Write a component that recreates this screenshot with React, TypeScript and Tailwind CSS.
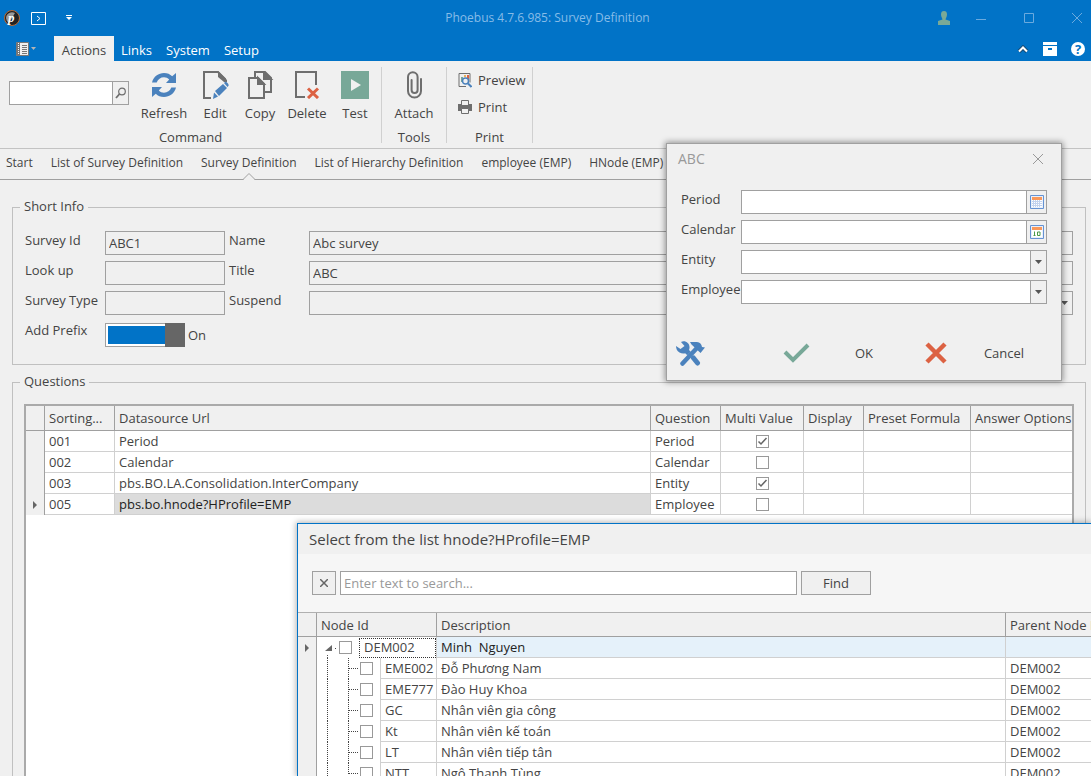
import React from "react";

const questions = [
  { sort: "001", url: "Period", question: "Period", multi: true },
  { sort: "002", url: "Calendar", question: "Calendar", multi: false },
  { sort: "003", url: "pbs.BO.LA.Consolidation.InterCompany", question: "Entity", multi: true },
  { sort: "005", url: "pbs.bo.hnode?HProfile=EMP", question: "Employee", multi: false },
];

const nodes = [
  { id: "EME002", name: "Đỗ Phương Nam" },
  { id: "EME777", name: "Đào Huy Khoa" },
  { id: "GC", name: "Nhân viên gia công" },
  { id: "Kt", name: "Nhân viên kế toán" },
  { id: "LT", name: "Nhân viên tiếp tân" },
  { id: "NTT", name: "Ngô Thanh Tùng" },
];

const documentTabs = [
  "Start",
  "List of Survey Definition",
  "Survey Definition",
  "List of Hierarchy Definition",
  "employee (EMP)",
  "HNode (EMP)",
];

/* ---------- Icons ---------- */

const RefreshIcon = () => (
  <svg width="28" height="28" viewBox="0 0 28 28" fill="#4b82bd">
    <path d="M2 11.500C3.500 5.500 8.500 2 14 2c3.500 0 6 1.200 8.200 3.300L26 2v10H16l3.200-3.500C17.700 7 16 6.300 14 6.300c-3.400 0-6 2-7.300 5.200z" />
    <path d="M26 16.500C24.500 22.500 19.500 26 14 26c-3.500 0-6-1.200-8.200-3.300L2 26V16h10l-3.200 3.500C10.300 21 12 21.700 14 21.700c3.400 0 6-2 7.300-5.200z" />
  </svg>
);

const EditIcon = () => (
  <svg width="28" height="28" viewBox="0 0 28 28">
    <path d="M10 27H3V1h14l7 7v3" fill="none" stroke="#6e6e6e" strokeWidth="2" />
    <path d="M17 0l9 9v2h-3l-6-5z" fill="#6e6e6e" />
    <path d="M14 20l8-7 4 4-8 8zM23 12l1-1c1-1 4.500 2.500 3.500 3.800L26.500 16zM13 21.500l4 4-5 2.500z" fill="#4b82bd" />
  </svg>
);

const CopyIcon = () => (
  <svg width="28" height="28" viewBox="0 0 28 28" fill="none" stroke="#6e6e6e" strokeWidth="2">
    <path d="M9 6V1h10l6 6v14h-6" />
    <path d="M18 1v7h7z" fill="#6e6e6e" />
    <path d="M3 7h9l6 6v14H3z" />
    <path d="M12 7v6h6z" fill="#6e6e6e" />
  </svg>
);

const DeleteIcon = () => (
  <svg width="28" height="28" viewBox="0 0 28 28" fill="none">
    <path d="M12 26H3V1h20v13" stroke="#6e6e6e" strokeWidth="2" />
    <path d="M15 17.500l10 9.500M25 17.500L15 27" stroke="#dc6243" strokeWidth="3" />
  </svg>
);

const TestIcon = () => (
  <svg width="28" height="28" viewBox="0 0 28 28">
    <path d="M0 0h28v28H0z" fill="#78a898" />
    <path d="M10 8l10 6-10 6z" fill="#f0f0f0" />
  </svg>
);

const AttachIcon = () => (
  <svg width="28" height="28" viewBox="0 0 28 28" fill="none" stroke="#6e6e6e" strokeWidth="2" strokeLinecap="round">
    <path d="M21 8v12a6.500 6.500 0 0 1-13 0V6a4.800 4.800 0 0 1 9.600 0v13a3 3 0 0 1-6 0V9" />
  </svg>
);

const PreviewIcon = () => (
  <svg width="14" height="16" viewBox="0 0 14 16" fill="none">
    <path d="M8 14.500H1V1.500h11v9" stroke="#6e6e6e" />
    <path d="M3 5h2v5H3z" fill="#78a898" />
    <path d="M6 3h2v2H6z" fill="#e8b25c" />
    <path d="M9 3h2v4H9z" fill="#dc6243" />
    <circle cx="7.500" cy="9" r="3" fill="#f0f0f0" stroke="#4b82bd" strokeWidth="1.500" />
    <path d="M10 11.500l3.500 3.500" stroke="#4b82bd" strokeWidth="2" />
  </svg>
);

const PrintIcon = () => (
  <svg width="14" height="14" viewBox="0 0 14 14">
    <path d="M0 4h14v7H0z" fill="#6e6e6e" />
    <path d="M3.500.500h7v5h-7zM3.500 8.500h7v5h-7z" fill="#f0f0f0" stroke="#6e6e6e" />
    <path d="M2 6h10" stroke="#6e6e6e" strokeWidth="2" />
  </svg>
);

const SearchIcon = () => (
  <svg width="12" height="12" viewBox="0 0 12 12" fill="none" stroke="#6e6e6e">
    <circle cx="7" cy="4.500" r="3.300" strokeWidth="1.200" />
    <path d="M4.500 7L1 11" strokeWidth="1.800" />
  </svg>
);

const ArrowDown = () => (
  <svg width="7" height="4" viewBox="0 0 7 4">
    <path d="M0 0h7L3.500 4z" fill="#555" />
  </svg>
);

const ArrowRight = () => (
  <svg className="mx-auto" width="4" height="8" viewBox="0 0 4 8">
    <path d="M0 0v8l4-4z" fill="#666" />
  </svg>
);

const CalendarIcon = ({ day }: { day?: boolean }) => (
  <svg width="14" height="14" viewBox="0 0 14 14">
    <path d="M.500.500h13v13H.500z" fill="#e8f0fb" stroke="#6693d3" />
    <path d="M2 2h10v3H2z" fill="#f9985a" />
    <path d="M2 5h10v7H2z" fill="#fff" />
    {day ? (
      <path d="M4.500 6.500v4M3.500 10.500h2M7.500 7h2.500v3.500H7.500z" fill="none" stroke="#4b9a48" />
    ) : (
      <path d="M2 6.500h10M2 8.500h10M2 10.500h10M3.500 5v7M5.500 5v7M7.500 5v7M9.500 5v7" stroke="#c3d3ee" strokeWidth="1" />
    )}
  </svg>
);

const ToolsIcon = () => (
  <svg width="29" height="25" viewBox="0 0 29 25" fill="none">
    <path d="M6.500 22.500L20 8" stroke="#4b82bd" strokeWidth="4.500" strokeLinecap="round" />
    <path d="M14 1h7c3 .3 4.500 2 5 5l3 .5-4.500 5.500-9-8.500z" fill="#4b82bd" />
    <path d="M17.500 17l4 5" stroke="#4b82bd" strokeWidth="5" strokeLinecap="round" />
    <path d="M9 8.500l4 4" stroke="#4b82bd" strokeWidth="5" />
    <path d="M5 1c4-2 9 1 8.500 6-.5 5-6 7-10 4.500C1 10 0 7.500 0 5l4.500 3 4-3z" fill="#4b82bd" />
  </svg>
);

const CloseIcon = () => (
  <svg width="10" height="10" viewBox="0 0 10 10" fill="none" stroke="currentColor">
    <path d="M0 0l10 10M10 0L0 10" />
  </svg>
);

/* ---------- Controls ---------- */

const CheckBox = ({ label, checked }: { label: string; checked?: boolean }) => (
  <span className="inline-grid h-[13px] w-[13px] shrink-0">
    <input
      type="checkbox"
      aria-label={label}
      defaultChecked={checked}
      className="peer col-start-1 row-start-1 h-[13px] w-[13px] appearance-none border border-[#999] bg-white"
    />
    <svg
      className="pointer-events-none col-start-1 row-start-1 hidden peer-checked:block"
      width="13"
      height="13"
      viewBox="0 0 13 13"
      fill="none"
    >
      <path d="M2.500 6.500L5 9l5.500-6" stroke="#666" strokeWidth="1.500" />
    </svg>
  </span>
);

const SelectBox = ({ id, className }: { id: string; className: string }) => (
  <span className={`grid h-6 flex-1 border border-[#a0a0a0] ${className}`}>
    <select id={id} className="col-start-1 row-start-1 w-full appearance-none px-1 outline-none">
      <option></option>
    </select>
    <span className="pointer-events-none col-start-1 row-start-1 flex w-4 items-center justify-center justify-self-end border-l border-[#a0a0a0] bg-[#f0f0f0]">
      <ArrowDown />
    </span>
  </span>
);

const DateBox = ({ id, day }: { id: string; day?: boolean }) => (
  <span className="flex h-6 flex-1 border border-[#a0a0a0] bg-white">
    <input id={id} className="min-w-0 flex-1 px-1 outline-none" />
    <button aria-label="Pick a date" className="flex w-5 items-center justify-center border-l border-[#a0a0a0] bg-[#f0f0f0]">
      <CalendarIcon day={day} />
    </button>
  </span>
);

const ReadBox = ({ id, value }: { id: string; value?: string }) => (
  <input id={id} defaultValue={value} className="h-6 w-full border border-[#a0a0a0] bg-[#f0f0f0] px-[3px] outline-none" />
);

const FieldLabel = ({ htmlFor, children }: { htmlFor: string; children: React.ReactNode }) => (
  <label htmlFor={htmlFor} className="leading-[18px]">
    {children}
  </label>
);

const RibbonButton = ({ label, width, children }: { label: string; width: string; children: React.ReactNode }) => (
  <button className={`flex flex-col items-center gap-1 ${width}`}>
    {children}
    {label}
  </button>
);

/* ---------- Window parts ---------- */

const TitleBar = () => (
  <header className="bg-[#0173c7] text-white">
    <div className="grid h-9 grid-cols-[1fr_auto_1fr] items-center pl-1">
      <div className="flex items-center">
        <svg width="16" height="16" viewBox="0 0 16 16">
          <circle cx="8" cy="8" r="7.500" fill="#222" stroke="#b86a35" />
          <path d="M2 8a6 6 0 0 1 9-5L5 13a6 6 0 0 1-3-5z" fill="#999" />
          <text x="4" y="12" fontSize="13" fontStyle="italic" fontWeight="bold" fontFamily="Liberation Serif, serif" fill="#fff">
            p
          </text>
        </svg>
        <button aria-label="Run command" className="ml-[11px]">
          <svg width="15" height="13" viewBox="0 0 15 13" fill="none" stroke="#fff">
            <path d="M.500.500h14v12H.500zM6 4l3 2.500L6 9" />
          </svg>
        </button>
        <button aria-label="Customize toolbar" className="ml-5">
          <svg width="6" height="6" viewBox="0 0 6 6" fill="#fff">
            <path d="M0 0h6v1H0zM0 2h6L3 5z" />
          </svg>
        </button>
      </div>
      <h1 className="text-xs text-[#86bce7]">Phoebus 4.7.6.985: Survey Definition</h1>
      <div className="flex items-center justify-end gap-[38px] pr-[9px] text-[#6baade]">
        <button aria-label="User" className="-mr-3">
          <svg width="12" height="14" viewBox="0 0 12 14" fill="#7aa996">
            <path d="M3 3.500C3 1 4 0 6 0s3 1 3 3.500S7.500 7.500 7.500 8.500L12 10v4H0v-4l4.500-1.500C4.500 7.500 3 6 3 3.500z" />
          </svg>
        </button>
        <button aria-label="Minimize">
          <svg width="10" height="10" viewBox="0 0 10 10" stroke="currentColor">
            <path d="M0 6.500h10" />
          </svg>
        </button>
        <button aria-label="Maximize">
          <svg width="10" height="10" viewBox="0 0 10 10" fill="none" stroke="currentColor">
            <path d="M.500.500h9v9h-9z" />
          </svg>
        </button>
        <button aria-label="Close">
          <CloseIcon />
        </button>
      </div>
    </div>

    <div className="flex h-[25px] items-stretch">
      <button aria-label="Application menu" className="flex w-[54px] items-center gap-0.5 pl-4">
        <svg width="13" height="14" viewBox="0 0 13 14">
          <path d="M.500.500h12v13H.500z" fill="#f0f0f0" stroke="#777" />
          <path d="M1 1h3v12H1z" fill="#777" />
          <path d="M6 3.500h5M6 5.500h5M6 7.500h5M6 9.500h5M6 11.500h5" stroke="#777" />
          <path d="M2.500 1v12" stroke="#fff" strokeDasharray="1 1" />
        </svg>
        <svg width="5" height="3" viewBox="0 0 5 3">
          <path d="M0 0h5L2.500 3z" fill="#b5b5b5" />
        </svg>
      </button>
      <button className="w-[60px] bg-[#f0f0f0] pt-0.5 text-[#444]">Actions</button>
      <button className="px-[7px] pt-0.5">Links</button>
      <button className="px-[7px] pt-0.5">System</button>
      <button className="px-[7px] pt-0.5">Setup</button>
      <div className="ml-auto flex items-center gap-3.5 pr-1.5">
        <button aria-label="Collapse ribbon">
          <svg width="12" height="8" viewBox="0 0 12 8" fill="none">
            <path d="M2 6.500l4-4 4 4" stroke="#174a73" strokeWidth="4" />
            <path d="M2 6.500l4-4 4 4" stroke="#fff" strokeWidth="2" />
          </svg>
        </button>
        <button aria-label="Archive">
          <svg width="14" height="14" viewBox="0 0 14 14">
            <path d="M0 0h14v3H0zM0 4h14v10H0z" fill="#fff" />
            <path d="M5 6h4v2H5z" fill="#0173c7" />
          </svg>
        </button>
        <button className="h-3.5 w-3.5 rounded-full bg-white text-center text-[13px] leading-[14px] font-bold text-[#0173c7]">
          ?
        </button>
      </div>
    </div>
  </header>
);

const Ribbon = () => (
  <div className="flex h-[88px] items-start border-b border-[#c3c3c3] pt-1.5">
    <section className="flex h-[76px] w-[382px] flex-col justify-between border-r border-[#d0d0d0] pt-1">
      <div className="flex items-start">
        <div className="mt-2.5 mr-[9px] ml-[9px] flex h-6 w-[120px] border border-[#a0a0a0] bg-white">
          <input aria-label="Search" className="min-w-0 flex-1 px-1 outline-none" />
          <button aria-label="Search" className="flex w-4 items-center justify-center border-l border-[#a0a0a0] bg-[#f0f0f0]">
            <SearchIcon />
          </button>
        </div>
        <RibbonButton label="Refresh" width="w-[52px]">
          <RefreshIcon />
        </RibbonButton>
        <RibbonButton label="Edit" width="w-[50px]">
          <EditIcon />
        </RibbonButton>
        <RibbonButton label="Copy" width="w-10">
          <CopyIcon />
        </RibbonButton>
        <RibbonButton label="Delete" width="w-[54px]">
          <DeleteIcon />
        </RibbonButton>
        <RibbonButton label="Test" width="w-[42px]">
          <TestIcon />
        </RibbonButton>
      </div>
      <p className="text-center leading-3">Command</p>
    </section>
    <section className="flex h-[76px] w-[65px] flex-col items-center justify-between border-r border-[#d0d0d0] pt-1">
      <RibbonButton label="Attach" width="w-full">
        <AttachIcon />
      </RibbonButton>
      <p className="leading-3">Tools</p>
    </section>
    <section className="flex h-[76px] w-[86px] flex-col justify-between border-r border-[#d0d0d0] pt-1">
      <div className="flex flex-col items-start gap-[9px] pl-[11px]">
        <button className="flex h-[18px] items-center gap-[6px]">
          <PreviewIcon />
          Preview
        </button>
        <button className="flex h-[18px] items-center gap-[6px]">
          <PrintIcon />
          Print
        </button>
      </div>
      <p className="text-center leading-3">Print</p>
    </section>
  </div>
);

const DocumentTabs = () => (
  <nav className="flex h-[31px] gap-[18px] border-b border-[#a0a0a0] pt-1 pl-1.5 text-xs leading-5 whitespace-nowrap">
    {documentTabs.map((tab) => (
      <a key={tab} href="#" className="relative">
        {tab}
        {tab === "Survey Definition" && (
          <svg className="absolute -bottom-px left-1/2 -ml-[7px]" width="14" height="7" viewBox="0 0 14 7">
            <path d="M0 6.500h1l6-6 6 6h1" fill="#f0f0f0" stroke="#a0a0a0" />
            <path d="M2 6.500h10" stroke="#f0f0f0" />
          </svg>
        )}
      </a>
    ))}
  </nav>
);

const ShortInfo = () => (
  <fieldset className="border border-[#c0c0c0] px-[11px] pb-[15px]">
    <legend className="-ml-1 px-1 pb-0.5 leading-4">Short Info</legend>
    <div className="grid grid-cols-[80px_120px_4px_80px_1fr] gap-y-1.5 px-px pt-[15px]">
      <FieldLabel htmlFor="surveyId">Survey Id</FieldLabel>
      <ReadBox id="surveyId" value="ABC1" />
      <span></span>
      <FieldLabel htmlFor="name">Name</FieldLabel>
      <ReadBox id="name" value="Abc survey" />

      <FieldLabel htmlFor="lookUp">Look up</FieldLabel>
      <ReadBox id="lookUp" />
      <span></span>
      <FieldLabel htmlFor="title">Title</FieldLabel>
      <ReadBox id="title" value="ABC" />

      <FieldLabel htmlFor="surveyType">Survey Type</FieldLabel>
      <ReadBox id="surveyType" />
      <span></span>
      <FieldLabel htmlFor="suspend">Suspend</FieldLabel>
      <SelectBox id="suspend" className="bg-[#f0f0f0]" />

      <FieldLabel htmlFor="addPrefix">Add Prefix</FieldLabel>
      <label className="flex h-7 items-center gap-[3px]">
        <input id="addPrefix" type="checkbox" role="switch" defaultChecked className="sr-only" />
        <span className="flex h-6 w-20 border border-r-0 border-[#a0a0a0] bg-white">
          <span className="m-0.5 mr-0 flex-1 bg-[#0173c7]"></span>
          <span className="-my-px w-5 bg-[#666]"></span>
        </span>
        On
      </label>
    </div>
  </fieldset>
);

const headCell = "border-r border-b border-[#a0a0a0] bg-[#f0f0f0] px-1 text-left font-normal";
const bodyCell = "border-r border-b border-[#d0d0d0] px-1 py-0";

const Questions = () => (
  <fieldset className="flex min-h-0 flex-1 flex-col border border-b-0 border-[#c0c0c0] px-[11px]">
    <legend className="-ml-1 px-1 pb-0.5 leading-4">Questions</legend>
    <div className="mt-[13px] min-h-0 flex-1 overflow-hidden border-2 border-b-0 border-[#aaa] bg-white">
      <table className="w-full table-fixed border-separate border-spacing-0 whitespace-nowrap">
        <colgroup>
          <col className="w-[19px]" />
          <col className="w-[70px]" />
          <col />
          <col className="w-[70px]" />
          <col className="w-[83px]" />
          <col className="w-[60px]" />
          <col className="w-[107px]" />
          <col className="w-[101px]" />
        </colgroup>
        <thead>
          <tr className="h-[25px]">
            <th className={headCell}></th>
            <th className={headCell}>Sorting...</th>
            <th className={headCell}>Datasource Url</th>
            <th className={headCell}>Question</th>
            <th className={headCell}>Multi Value</th>
            <th className={headCell}>Display</th>
            <th className={headCell}>Preset Formula</th>
            <th className={`${headCell} border-r-0`}>Answer Options</th>
          </tr>
        </thead>
        <tbody>
          {questions.map((q) => (
            <tr key={q.sort} className="h-[21px]">
              <td className="border-r border-[#a0a0a0] bg-[#f0f0f0] p-0">{q.sort === "005" && <ArrowRight />}</td>
              <td className={bodyCell}>{q.sort}</td>
              <td className={`${bodyCell} ${q.sort === "005" ? "bg-[#dcdcdc] text-[#222]" : ""}`}>{q.url}</td>
              <td className={bodyCell}>{q.question}</td>
              <td className={bodyCell}>
                <span className="flex justify-center">
                  <CheckBox label={`Multi value ${q.question}`} checked={q.multi} />
                </span>
              </td>
              <td className={bodyCell}></td>
              <td className={bodyCell}></td>
              <td className={`${bodyCell} border-r-0`}></td>
            </tr>
          ))}
        </tbody>
      </table>
    </div>
  </fieldset>
);

const AnswerDialog = () => (
  <div
    role="dialog"
    aria-label="ABC"
    className="absolute top-[143px] left-[666px] flex h-[238px] w-[396px] flex-col border border-[#a0a0a0] bg-[#f0f0f0] shadow-[0_0_6px_1px_rgba(0,0,0,0.4)]"
  >
    <div className="flex h-[30px] items-center justify-between pr-[18px] pl-[11px] text-[#999]">
      <h2 className="text-sm">ABC</h2>
      <button aria-label="Close">
        <CloseIcon />
      </button>
    </div>
    <div className="mt-4 grid grid-cols-[60px_1fr] gap-y-1.5 px-3.5">
      <FieldLabel htmlFor="period">Period</FieldLabel>
      <DateBox id="period" />
      <FieldLabel htmlFor="calendar">Calendar</FieldLabel>
      <DateBox id="calendar" day />
      <FieldLabel htmlFor="entity">Entity</FieldLabel>
      <SelectBox id="entity" className="bg-white" />
      <FieldLabel htmlFor="employee">Employee</FieldLabel>
      <SelectBox id="employee" className="bg-white" />
    </div>
    <div className="mt-auto mb-[11px] flex h-8 items-center pl-[9px]">
      <button aria-label="Tools" className="mr-[78px]">
        <ToolsIcon />
      </button>
      <button className="flex w-[143px] items-center">
        <svg width="27" height="20" viewBox="0 0 27 20" fill="none">
          <path d="M2 9l8 8L25 2" stroke="#78a898" strokeWidth="4" />
        </svg>
        <span className="w-[108px] text-center">OK</span>
      </button>
      <button className="flex items-center">
        <svg width="22" height="22" viewBox="0 0 22 22" fill="none">
          <path d="M2 2l18 18M20 2L2 20" stroke="#dc6243" strokeWidth="4.500" />
        </svg>
        <span className="w-[114px] text-center">Cancel</span>
      </button>
    </div>
  </div>
);

const NodePicker = () => (
  <div
    role="dialog"
    aria-label="Select from the list"
    className="absolute top-[523px] right-0 bottom-0 left-[297px] flex flex-col overflow-hidden border-t border-l border-[#0173c7] bg-[#f6f6f6] shadow-[0_0_6px_1px_rgba(0,0,0,0.3)]"
  >
    <h2 className="bg-[#f0f0f0] pl-[11px] text-[15px] leading-[30px]">Select from the list hnode?HProfile=EMP</h2>
    <div className="flex h-[58px] shrink-0 items-center gap-1 pl-3.5">
      <button aria-label="Clear" className="flex h-6 w-6 items-center justify-center border border-[#a0a0a0] bg-[#f0f0f0]">
        <svg width="8" height="8" viewBox="0 0 8 8" stroke="#666" strokeWidth="1.500">
          <path d="M0 0l8 8M8 0L0 8" />
        </svg>
      </button>
      <input
        aria-label="Search nodes"
        placeholder="Enter text to search..."
        className="h-6 w-[457px] border border-[#a0a0a0] bg-white px-[3px] outline-none placeholder:text-[#999]"
      />
      <button className="h-6 w-[70px] border border-[#a0a0a0] bg-[#f0f0f0] leading-[22px]">Find</button>
    </div>
    <table className="w-full table-fixed border-separate border-spacing-0 border-t border-[#b0b0b0] bg-white whitespace-nowrap">
      <colgroup>
        <col className="w-[19px]" />
        <col className="w-[120px]" />
        <col />
        <col className="w-[85px]" />
      </colgroup>
      <thead>
        <tr className="h-6">
          <th className={headCell}></th>
          <th className={headCell}>Node Id</th>
          <th className={headCell}>Description</th>
          <th className={`${headCell} overflow-hidden border-r-0`}>Parent Node Id</th>
        </tr>
      </thead>
      <tbody>
        <tr className="h-[21px]">
          <td className="border-r border-[#a0a0a0] bg-[#f0f0f0] p-0">
            <ArrowRight />
          </td>
          <td className="border-r border-[#d0d0d0] p-0">
            <span className="flex h-[21px] items-center">
              <svg width="22" height="21" viewBox="0 0 22 21">
                <path d="M15 8v6H8z" fill="#666" />
                <path d="M18 11h1v1h-1z" fill="#444" />
                <path d="M10.500 18v3" stroke="#555" strokeDasharray="1 1" />
              </svg>
              <CheckBox label="DEM002" />
              <span className="ml-[7px] flex-1 border border-dotted border-[#333] pb-0.5 pl-1 leading-4">DEM002</span>
            </span>
          </td>
          <td className={`${bodyCell} bg-[#e5f1fa] whitespace-pre text-[#222]`}>Minh  Nguyen</td>
          <td className={`${bodyCell} border-r-0 bg-[#e5f1fa]`}></td>
        </tr>
        {nodes.map((node) => (
          <tr key={node.id} className="h-[21px]">
            <td className="border-r border-[#a0a0a0] bg-[#f0f0f0] p-0"></td>
            <td className="border-r border-[#d0d0d0] p-0">
              <span className="flex h-[21px] items-center">
                {/* dotted tree branches, the last child closes the inner one */}
                <svg width="43" height="21" viewBox="0 0 43 21" fill="none" stroke="#444" strokeDasharray="1 1">
                  <path d="M10.500 0v21" />
                  <path d={node.id === "NTT" ? "M31.500 0v11" : "M31.500 0v21"} />
                  <path d="M32 10.500h9" />
                </svg>
                <CheckBox label={node.id} />
                <span className="ml-[7px] flex-1 border-b border-l border-[#d0d0d0] pl-1">{node.id}</span>
              </span>
            </td>
            <td className={bodyCell}>{node.name}</td>
            <td className={`${bodyCell} border-r-0`}>DEM002</td>
          </tr>
        ))}
      </tbody>
    </table>
  </div>
);

export default function App() {
  return (
    <div className="relative flex h-screen flex-col overflow-hidden bg-[#f0f0f0] font-['Open_Sans','Noto_Sans',sans-serif] text-[13px] leading-5 text-[#444]">
      <TitleBar />
      <Ribbon />
      <DocumentTabs />
      <main className="flex min-h-0 flex-1 flex-col gap-2 pt-[18px] pr-[5px] pl-3">
        <ShortInfo />
        <Questions />
      </main>
      <AnswerDialog />
      <NodePicker />
    </div>
  );
}
